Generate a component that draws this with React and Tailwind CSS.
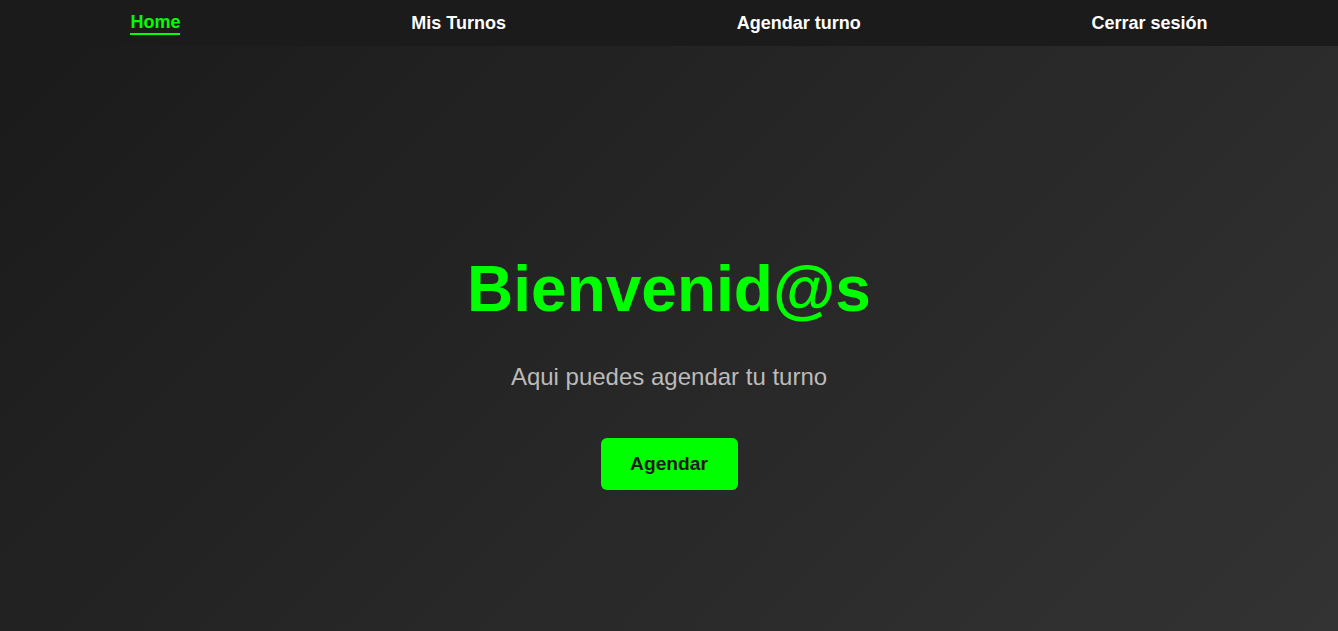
export default function App() {
  return (
    <div
      className="min-h-[631px] w-full flex flex-col bg-[linear-gradient(135deg,#1a1a1a,#333333)]"
      style={{ fontFamily: '"Liberation Sans", Arial, sans-serif' }}
    >
      <nav className="h-[46px] w-full bg-[#1b1b1b] flex items-center justify-around px-[15px]">
        <a className="text-[18px] font-bold text-[#00ff00] leading-[21px] border-b-2 border-[#00ff00] mt-[1px]">Home</a>
        <a className="text-[18px] font-bold text-white leading-[21px]">Mis Turnos</a>
        <a className="text-[18px] font-bold text-white leading-[21px]">Agendar turno</a>
        <a className="text-[18px] font-bold text-white leading-[21px]">Cerrar sesión</a>
      </nav>
      <main className="flex flex-col items-center pt-[206px]">
        <h1 className="text-[64px] font-bold text-[#00ff00] leading-[74px]">Bienvenid@s</h1>
        <p className="mt-[37px] text-[24px] text-[#bbbbbb] leading-[28px]">Aqui puedes agendar tu turno</p>
        <button className="mt-[47px] h-[52px] w-[137px] rounded-[6px] bg-[#00ff00] text-[19.2px] font-bold text-[#1a1a1a]">
          Agendar
        </button>
      </main>
    </div>
  );
}
